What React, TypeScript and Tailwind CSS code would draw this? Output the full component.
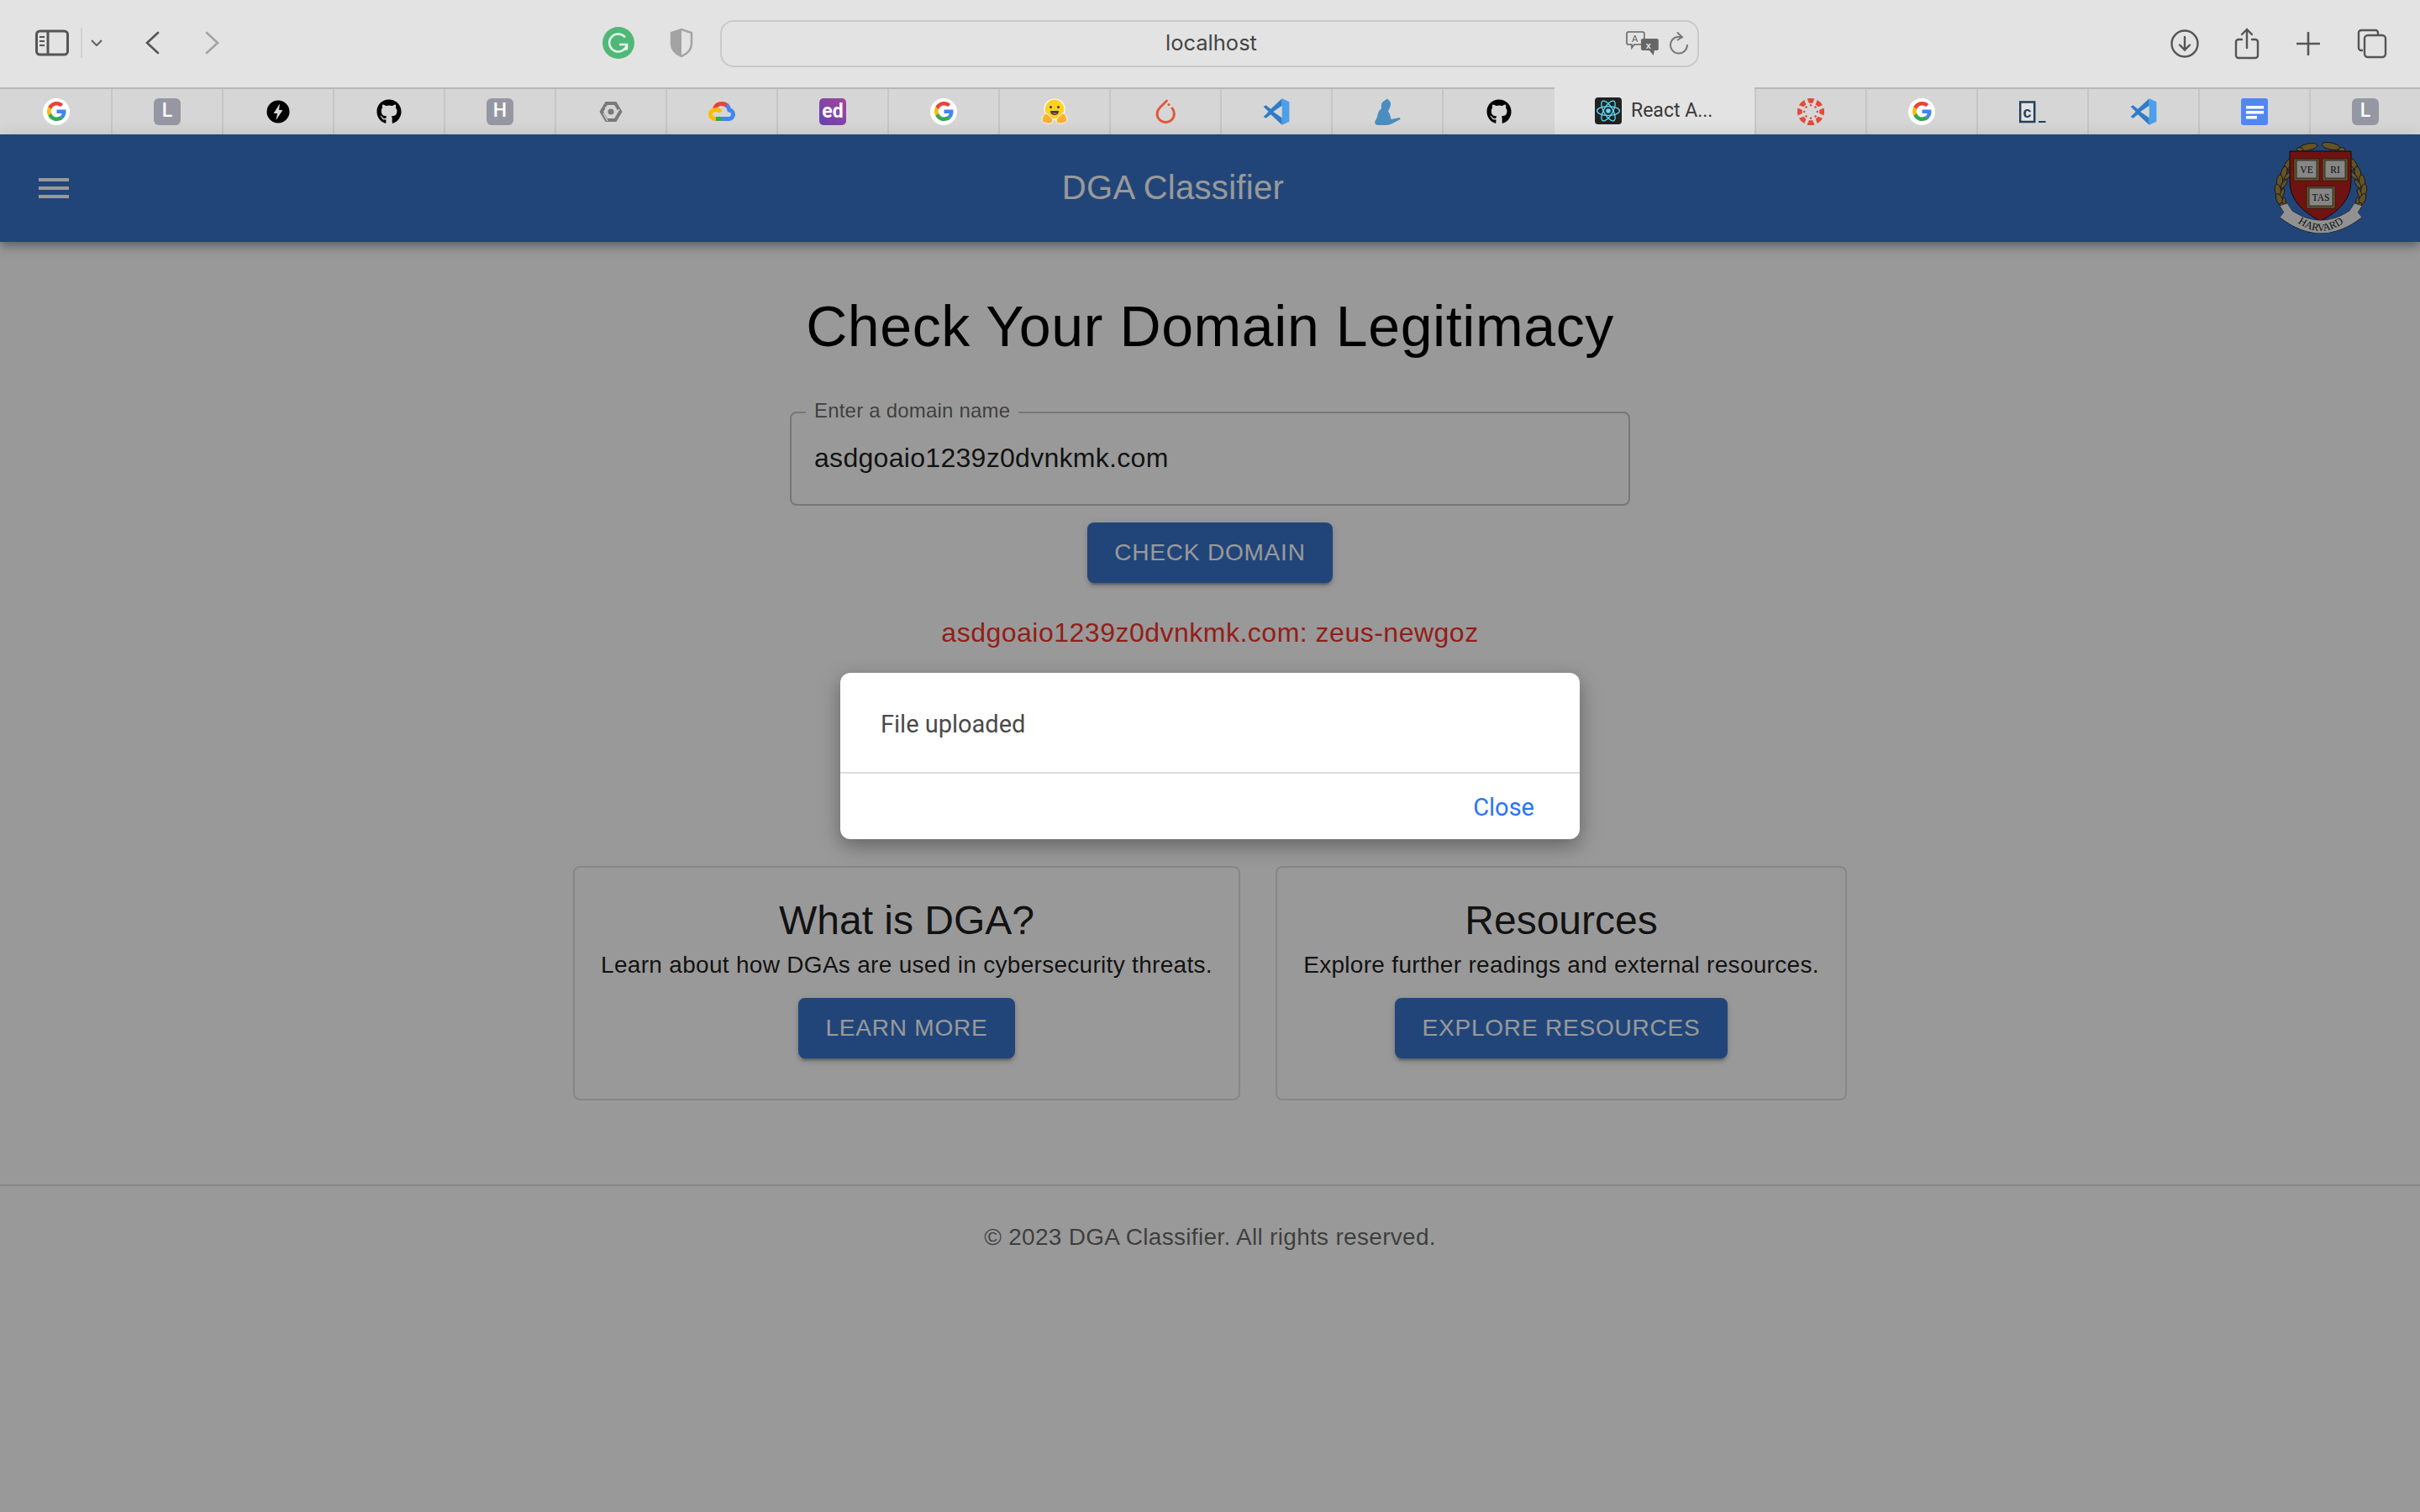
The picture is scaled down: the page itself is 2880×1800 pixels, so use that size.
import { FaGithub } from 'react-icons/fa'

const sans = 'font-["Liberation_Sans",Arial,sans-serif]'
const blueBtn =
  'rounded-lg bg-[#3774ca] font-["Liberation_Sans",Arial,sans-serif] text-[28px] leading-[40px] tracking-[0.8px] text-white uppercase shadow-[0_6px_2px_-4px_rgba(0,0,0,0.2),0_4px_4px_0_rgba(0,0,0,0.14),0_2px_10px_0_rgba(0,0,0,0.12)]'

function GoogleIcon() {
  return (
    <div className="flex h-8 w-8 items-center justify-center rounded-full bg-white">
      <svg viewBox="0 0 48 48" className="h-[23px] w-[23px]">
        <path fill="#EA4335" d="M24 9.5c3.54 0 6.71 1.22 9.21 3.6l6.85-6.85C35.9 2.38 30.47 0 24 0 14.62 0 6.51 5.38 2.56 13.22l7.98 6.19C12.43 13.72 17.74 9.5 24 9.5z" />
        <path fill="#4285F4" d="M46.98 24.55c0-1.57-.15-3.09-.38-4.55H24v9.02h12.94c-.58 2.96-2.26 5.48-4.78 7.18l7.73 6c4.51-4.18 7.09-10.36 7.09-17.65z" />
        <path fill="#FBBC05" d="M10.53 28.59c-.48-1.45-.76-2.99-.76-4.59s.27-3.14.76-4.59l-7.98-6.19C.92 16.46 0 20.12 0 24c0 3.88.92 7.54 2.56 10.78l7.97-6.19z" />
        <path fill="#34A853" d="M24 48c6.48 0 11.93-2.13 16.02-5.81l-7.73-6c-2.15 1.45-4.92 2.3-8.29 2.3-6.26 0-11.57-4.22-13.47-9.91l-7.98 6.19C6.51 42.62 14.62 48 24 48z" />
      </svg>
    </div>
  )
}

function LetterIcon({ letter }: { letter: string }) {
  return (
    <div className="flex h-8 w-8 items-center justify-center rounded-[6px] bg-[#9597a3] font-['Roboto',sans-serif] text-[23px] font-medium text-white">
      {letter}
    </div>
  )
}

function BoltIcon() {
  return (
    <svg viewBox="0 0 32 32" className="h-8 w-8">
      <circle cx="16" cy="16" r="13.5" fill="#000" />
      <path fill="#d6d6d6" d="M18 6.5 10.5 18h4.5l-1.5 8L21.5 14H17z" />
    </svg>
  )
}

function ChipIcon() {
  return (
    <svg viewBox="0 0 32 32" className="h-8 w-8">
      <path fill="none" stroke="#7a7a7a" strokeWidth="4" d="M10.7 6h10.600L27.200 16l-5.900 10H10.700L4.800 16z" />
      <circle cx="16" cy="16" r="3.600" fill="#7a7a7a" />
      <path fill="none" stroke="#d6d6d6" strokeWidth="1.300" d="M9 11h8M26 13l-5 7M12 27l-5-9" />
    </svg>
  )
}

function CloudIcon() {
  return (
    <svg viewBox="0 0 32 32" className="h-8 w-8">
      <path fill="none" stroke="#ea4335" strokeWidth="5" d="M7 14c1-5 4.500-7.500 9-7.500 3 0 5.500 1 7.500 3.500" />
      <path fill="none" stroke="#4285f4" strokeWidth="5" d="M21.500 8c2 1.500 3 3.500 3.500 6 2.500.3 4.500 2.500 4.500 5 0 3-2 5.500-5 5.500H16" />
      <path fill="none" stroke="#34a853" strokeWidth="5" d="M16 24.500H8" />
      <path fill="none" stroke="#fbbc05" strokeWidth="5" d="M9 24.500c-3 0-6.500-2-6.500-5.500S6 13.500 9.500 13.500c2.500 0 4 1.200 5 3" />
    </svg>
  )
}

function EdIcon() {
  return (
    <div className="flex h-8 w-8 items-center justify-center rounded-[5px] bg-gradient-to-tr from-[#6a41ad] to-[#a0459b] font-['Roboto',sans-serif] text-[23px] leading-none font-bold text-white">
      ed
    </div>
  )
}

function HuggingIcon() {
  return (
    <svg viewBox="0 0 32 32" className="h-8 w-8">
      <circle cx="16" cy="13" r="12" fill="#ffd21e" stroke="#fff" strokeWidth="1.2" />
      <circle cx="11.500" cy="10.500" r="1.500" fill="#3a3b45" />
      <circle cx="20.500" cy="10.500" r="1.500" fill="#3a3b45" />
      <path fill="#3a3b45" d="M11 15h10c0 3-2 5-5 5s-5-2-5-5z" />
      <path fill="#ef4e4e" d="M13 18c1-1 5-1 6 0-1 1.500-5 1.500-6 0z" />
      <path fill="#f9b233" stroke="#fff" strokeWidth="1" d="M1 26c0-4 3-8 5-8s2 2 4 3 4 4 4 6-3 4-7 3-6-2-6-4zM31 26c0-4-3-8-5-8s-2 2-4 3-4 4-4 6 3 4 7 3 6-2 6-4z" />
    </svg>
  )
}

function TorchIcon() {
  return (
    <svg viewBox="0 0 32 32" className="h-8 w-8">
      <path fill="none" stroke="#e2583e" strokeWidth="3" strokeLinecap="round" d="M17.500 3 9.500 11c-4.500 4.500-4.500 10.500-.5 14.500s10.500 4 14.500 0 3.500-10 .5-13.500" />
      <circle cx="20" cy="7.500" r="1.600" fill="#e2583e" />
    </svg>
  )
}

function VsCodeIcon() {
  return (
    <svg viewBox="0 0 100 100" className="h-8 w-8">
      <path fill="#2f7cc8" d="M71 1 29 40 11 26 2 31 21 50 2 69l9 5 18-14 42 39V73L38 50 71 27z" />
      <path fill="#4c9fe8" d="M71 1 98 13V87L71 99z" />
    </svg>
  )
}

function CatIcon() {
  return (
    <svg viewBox="0 0 32 32" className="h-8 w-8">
      <path fill="#4b8dbe" d="M16 .5 18.500 3Q21 6 19.500 10 18 14 17 15 20 20 20.500 25L31 23l.5 2L22 30Q19 32 14 32H4Q.5 31 1.500 27 3 25 4 22 5 15 9 12 8 6 11 4z" />
    </svg>
  )
}

function ReactIcon() {
  return (
    <div className="flex h-8 w-8 items-center justify-center rounded-[4px] bg-[#222222]">
      <svg viewBox="-14 -14 28 28" className="h-[30px] w-[30px]">
        <circle r="2.600" fill="#61dafb" />
        <g fill="none" stroke="#61dafb" strokeWidth="1.200">
          <ellipse rx="12.500" ry="5" />
          <ellipse rx="12.500" ry="5" transform="rotate(60)" />
          <ellipse rx="12.500" ry="5" transform="rotate(120)" />
        </g>
      </svg>
    </div>
  )
}

function CanvasIcon() {
  const dots = [0, 45, 90, 135, 180, 225, 270, 315]
  return (
    <svg viewBox="-16 -16 32 32" className="h-8 w-8">
      {dots.map((a) => (
        <g key={a} transform={`rotate(${a})`}>
          <path fill="#e04c3a" d="M-4.500-15.400a16 16 0 0 1 9 0l-2.500 5.400a8 8 0 0 0-4 0z" />
          <circle cx="0" cy="-7.800" r="1.300" fill="#e04c3a" />
        </g>
      ))}
    </svg>
  )
}

function CodioIcon() {
  return (
    <svg viewBox="0 0 32 32" className="h-8 w-8">
      <rect x="1.200" y="4.500" width="17" height="23.500" fill="#e3e3e3" stroke="#24405c" strokeWidth="2.500" />
      <text x="4.500" y="22.500" fontSize="18" fontWeight="700" fill="#24405c" fontFamily="Liberation Sans, sans-serif">c</text>
      <rect x="23" y="27" width="8.500" height="2" fill="#24405c" />
    </svg>
  )
}

function DocsIcon() {
  return (
    <svg viewBox="0 0 32 32" className="h-8 w-8">
      <rect width="32" height="32" rx="3" fill="#5287f0" />
      <rect x="6" y="9" width="21" height="3.500" fill="#fff" />
      <rect x="6" y="15" width="21" height="3.500" fill="#fff" />
      <rect x="6" y="21" width="13" height="3.500" fill="#fff" />
    </svg>
  )
}

function GithubTab() {
  return <FaGithub className="h-[30px] w-[30px] text-black" />
}

const leftTabs = [
  <GoogleIcon />,
  <LetterIcon letter="L" />,
  <BoltIcon />,
  <GithubTab />,
  <LetterIcon letter="H" />,
  <ChipIcon />,
  <CloudIcon />,
  <EdIcon />,
  <GoogleIcon />,
  <HuggingIcon />,
  <TorchIcon />,
  <VsCodeIcon />,
  <CatIcon />,
  <GithubTab />,
]

const rightTabs = [
  <CanvasIcon />,
  <GoogleIcon />,
  <CodioIcon />,
  <VsCodeIcon />,
  <DocsIcon />,
  <LetterIcon letter="L" />,
]

function Toolbar() {
  const stroke = '#555555'
  return (
    <div className="flex h-[104px] items-center bg-[#e3e3e3]">
      <div className="flex h-full w-[857px] items-center pb-[2px] pl-[42px]">
        <svg viewBox="0 0 40 32" className="h-8 w-10" fill="none" stroke={stroke} strokeWidth="3">
          <rect x="1.500" y="2" width="37" height="28" rx="4" />
          <path d="M15 2v28" />
          <path d="M5 9h6M5 14h6M5 19h6" strokeWidth="2" />
        </svg>
        <div className="ml-[14px] h-9 w-[2px] bg-[#d0d0d0]" />
        <svg viewBox="0 0 14 8" className="ml-[10px] h-2 w-[14px]" fill="none" stroke="#666666" strokeWidth="2.200">
          <path d="M1 1l6 6 6-6" />
        </svg>
        <svg viewBox="0 0 18 28" className="ml-[50px] h-7 w-[18px]" fill="none" stroke={stroke} strokeWidth="2.600" strokeLinecap="round">
          <path d="M16 2 3 14l13 12" />
        </svg>
        <svg viewBox="0 0 18 28" className="ml-[54px] h-7 w-[18px]" fill="none" stroke="#a3a3a3" strokeWidth="2.600" strokeLinecap="round">
          <path d="M2 2l13 12L2 26" />
        </svg>
        <svg viewBox="0 0 38 38" className="ml-[455px] h-[38px] w-[38px]">
          <circle cx="19" cy="19" r="19" fill="#4fb878" />
          <path d="M27 12.500A10.500 10.500 0 1 0 29 21h-9" fill="none" stroke="#e3f5e9" strokeWidth="2.600" />
          <path d="M24 27l5-.5.500-4.500" fill="none" stroke="#e3f5e9" strokeWidth="2.200" />
        </svg>
        <svg viewBox="0 0 28 34" className="ml-[42px] h-[34px] w-7">
          <path d="M14 1 2 5v13c0 7 5 12 12 15 7-3 12-8 12-15V5z" fill="none" stroke="#a3a3a3" strokeWidth="2.400" />
          <path d="M14 1 2 5v13c0 7 5 12 12 15z" fill="#a3a3a3" />
        </svg>
      </div>
      <div className="flex h-[56px] w-[1165px] items-center rounded-2xl border-2 border-[#c9c9c9] pr-[10px] pb-[2px]">
        <span className="ml-[528px] w-[110px] font-['Inter',sans-serif] text-[25.5px] text-[#454545]">localhost</span>
        <svg viewBox="0 0 40 30" className="ml-[439px] h-[30px] w-10">
          <path d="M3 2h17a2 2 0 0 1 2 2v11a2 2 0 0 1-2 2H10l-3 4v-4H3a2 2 0 0 1-2-2V4a2 2 0 0 1 2-2z" fill="#e3e3e3" stroke="#666666" strokeWidth="1.600" />
          <text x="7" y="14" fontSize="11" fill="#666666" fontFamily="Liberation Sans, sans-serif">A</text>
          <path d="M20 10h17a2 2 0 0 1 2 2v10a2 2 0 0 1-2 2h-3l-1 6-5-6h-8a2 2 0 0 1-2-2V12a2 2 0 0 1 2-2z" fill="#666666" />
          <text x="24" y="22" fontSize="11" fontWeight="700" fill="#e3e3e3" fontFamily="Liberation Sans, sans-serif">x</text>
        </svg>
        <svg viewBox="0 0 24 28" className="ml-[11px] h-7 w-6" fill="none" stroke="#777777" strokeWidth="2">
          <path d="M16 7.500A10 10 0 1 0 22 16" />
          <path d="M10 1.500l6 5.500-6 4" />
        </svg>
      </div>
      <div className="flex flex-1 items-center pl-[561px]">
        <svg viewBox="0 0 34 34" className="h-[34px] w-[34px]" fill="none" stroke={stroke} strokeWidth="2.400" strokeLinecap="round">
          <circle cx="17" cy="17" r="15.500" />
          <path d="M17 9v15M11 18.500l6 6 6-6" />
        </svg>
        <svg viewBox="0 0 30 38" className="ml-[42px] h-[38px] w-[30px]" fill="none" stroke={stroke} strokeWidth="2.400" strokeLinecap="round">
          <path d="M9 14H5a3 3 0 0 0-3 3v16a3 3 0 0 0 3 3h20a3 3 0 0 0 3-3V17a3 3 0 0 0-3-3h-4" />
          <path d="M15 24V2M9 8l6-6 6 6" />
        </svg>
        <svg viewBox="0 0 28 28" className="ml-[44px] h-7 w-7" fill="none" stroke={stroke} strokeWidth="2.600" strokeLinecap="round">
          <path d="M14 1v26M1 14h26" />
        </svg>
        <svg viewBox="0 0 36 36" className="ml-[44px] h-9 w-9" fill="none" stroke={stroke} strokeWidth="2.400">
          <path d="M7 26H5a3 3 0 0 1-3-3V5a3 3 0 0 1 3-3h17a3 3 0 0 1 3 3v3" />
          <rect x="9" y="8" width="25" height="26" rx="4" />
        </svg>
      </div>
    </div>
  )
}

function TabStrip() {
  return (
    <div className="flex h-[56px]">
      <div className="flex h-full border-t-2 border-[#b8b8b8] bg-[#d6d6d6] pl-[2px]">
        {leftTabs.map((icon, i) => (
          <div key={i} className="flex h-full w-[132px] items-center justify-center border-r-2 border-[#c6c6c6] pb-[1px] last:border-r-0">
            {icon}
          </div>
        ))}
      </div>
      <div className="flex h-full flex-1 items-center bg-[#e3e3e3] pl-[48px]">
        <ReactIcon />
        <span className="ml-[11px] font-['Roboto',sans-serif] text-[23px] text-[#3a3a3a]">React A...</span>
      </div>
      <div className="flex h-full border-t-2 border-[#b8b8b8] bg-[#d6d6d6]">
        {rightTabs.map((icon, i) => (
          <div key={i} className="flex h-full w-[132px] items-center justify-center border-l-2 border-[#c6c6c6] pb-[1px]">
            {icon}
          </div>
        ))}
      </div>
    </div>
  )
}

function Crest() {
  const gold = '#a98a42'
  const leafSpots = [
    [19, 28, 30], [14, 38, 15], [9, 48, 5], [7, 59, -10], [9, 70, -25], [15, 80, -40],
  ]
  return (
    <svg viewBox="0 0 116 112" className="h-[112px] w-[116px]">
      <g fill={gold} stroke="#1c1c10" strokeWidth="0.8">
        {leafSpots.map(([x, y, r], i) => (
          <g key={i}>
            <ellipse cx={x} cy={y} rx="3.500" ry="8" transform={`rotate(${r} ${x} ${y})`} />
            <ellipse cx={116 - x} cy={y} rx="3.500" ry="8" transform={`rotate(${-r} ${116 - x} ${y})`} />
            <ellipse cx={x + 5} cy={y + 3} rx="2.200" ry="6" transform={`rotate(${r + 30} ${x + 5} ${y + 3})`} />
            <ellipse cx={111 - x} cy={y + 3} rx="2.200" ry="6" transform={`rotate(${-r - 30} ${111 - x} ${y + 3})`} />
          </g>
        ))}
        <ellipse cx="43" cy="7" rx="11" ry="4" transform="rotate(-12 43 7)" />
        <ellipse cx="70" cy="6" rx="11" ry="4" transform="rotate(12 70 6)" />
        <ellipse cx="33" cy="10" rx="4" ry="2.500" />
        <ellipse cx="83" cy="10" rx="4" ry="2.500" />
      </g>
      <path d="M21 12H94V48Q94 77 57.500 95Q21 77 21 48Z" fill="#b7211d" stroke="#111111" strokeWidth="1" />
      {[
        { x: 29, y: 23, w: 24, h: 22, a: 'VE' },
        { x: 63, y: 23, w: 24, h: 22, a: 'RI' },
        { x: 44, y: 56, w: 28, h: 22, a: 'TAS' },
      ].map((b) => (
        <g key={b.a}>
          <rect x={b.x - 3} y={b.y - 2} width={b.w + 6} height={b.h + 4} fill={gold} stroke="#222222" strokeWidth="0.6" />
          <rect x={b.x} y={b.y} width={b.w} height={b.h - 1} fill="#e0e0e0" stroke="#333333" strokeWidth="0.8" />
          <text x={b.x + b.w / 2} y={b.y + 15} textAnchor="middle" fontSize="11.500" fill="#111111" fontFamily="Liberation Serif, serif">{b.a}</text>
        </g>
      ))}
      <path d="M14 85Q58 119 102 85" fill="none" stroke="#222222" strokeWidth="15.500" />
      <path d="M14 85Q58 119 102 85" fill="none" stroke="#f2f2f2" strokeWidth="14.500" />
      <path d="M14 85l-5-8 9-3 6 9M102 85l5-8-9-3-6 9" fill="#f2f2f2" stroke="#444444" strokeWidth="0.6" />
      <path id="harvard-text" d="M20 88Q58 126 96 88" fill="none" />
      <text fontSize="12.500" fill="#1a1a1a" fontFamily="Liberation Serif, serif">
        <textPath href="#harvard-text" startOffset="50%" textAnchor="middle">HARVARD</textPath>
      </text>
    </svg>
  )
}

function InfoCard({ title, text, action, className }: { title: string; text: string; action: string; className: string }) {
  return (
    <div className={`flex h-[279px] flex-col items-center rounded-lg border-2 border-[#e0e0e0] ${className}`}>
      <h5 className="mt-[34px] text-[48px] leading-[58px] text-black/90">{title}</h5>
      <p className="text-[28px] leading-[48px] tracking-[0.3px] text-black/90">{text}</p>
      <button className={`mt-[15px] h-[72px] px-[32px] ${blueBtn}`}>{action}</button>
    </div>
  )
}

function DomainField() {
  return (
    <div className="relative mt-[60px] h-[112px] w-[1000px] rounded-lg border-2 border-[#c6c6c6] px-[27px]">
      <span className="absolute top-[-15px] left-[17px] bg-white px-[10px] text-[24px] leading-[24px] tracking-[0.2px] text-black/60">Enter a domain name</span>
      <div className="flex h-full items-center pb-[3px] text-[32px] tracking-[0.3px] text-black/90">asdgoaio1239z0dvnkmk.com</div>
    </div>
  )
}

export default function App() {
  return (
    <div className="flex h-[1800px] w-[2880px] flex-col overflow-hidden bg-white">
      <Toolbar />
      <TabStrip />
      <div className={`relative flex flex-1 flex-col ${sans}`}>
        <header className="flex h-[128px] items-center bg-[#3773ca] shadow-[0_4px_8px_-2px_rgba(0,0,0,0.2),0_8px_10px_0_rgba(0,0,0,0.14),0_2px_20px_0_rgba(0,0,0,0.12)]">
          <div className="flex w-[112px] items-center pl-[40px]">
            <svg viewBox="0 0 24 24" className="h-12 w-12" fill="#ffffff">
              <path d="M3 18h18v-2H3v2zm0-5h18v-2H3v2zm0-7v2h18V6H3z" />
            </svg>
          </div>
          <div className="flex-1 pb-[2px] text-center text-[40px] tracking-[0.3px] text-white">DGA Classifier</div>
          <div className="flex w-[200px] items-center justify-end pr-[60px]">
            <Crest />
          </div>
        </header>

        <main className="flex flex-col items-center">
          <h1 className="mt-[58px] text-[68px] leading-[84px] tracking-[0.6px] text-black">Check Your Domain Legitimacy</h1>
          <DomainField />
          <button className={`mt-[20px] h-[72px] px-[32px] ${blueBtn}`}>Check Domain</button>
          <p className="mt-[41px] text-[32px] leading-[36px] tracking-[0.5px] text-[#f5332b]">asdgoaio1239z0dvnkmk.com: zeus-newgoz</p>
          <div className="mt-[260px] flex gap-[42px]">
            <InfoCard title="What is DGA?" text="Learn about how DGAs are used in cybersecurity threats." action="Learn More" className="w-[794px]" />
            <InfoCard title="Resources" text="Explore further readings and external resources." action="Explore Resources" className="w-[680px]" />
          </div>
        </main>

        <footer className="mt-[100px] border-t-2 border-[#e0e0e0] pt-[43px] text-center text-[28px] leading-[36px] tracking-[0.3px] text-black/60">
          © 2023 DGA Classifier. All rights reserved.
        </footer>

        <div className="absolute inset-0 flex justify-center bg-black/40 pt-[641px]">
          <div className="flex h-[198px] w-[880px] flex-col rounded-xl bg-white shadow-[0_8px_24px_rgba(0,0,0,0.35)]">
            <div className="flex h-[120px] items-center border-b-2 border-[#dcdcdc] px-[48px] pt-[5px] font-['Roboto',sans-serif] text-[29px] text-[#4a4a4a]">File uploaded</div>
            <div className="flex flex-1 items-center justify-end px-[54px] pt-[3px] font-['Roboto',sans-serif] text-[29px] text-[#2a74f5]">Close</div>
          </div>
        </div>
      </div>
    </div>
  )
}
